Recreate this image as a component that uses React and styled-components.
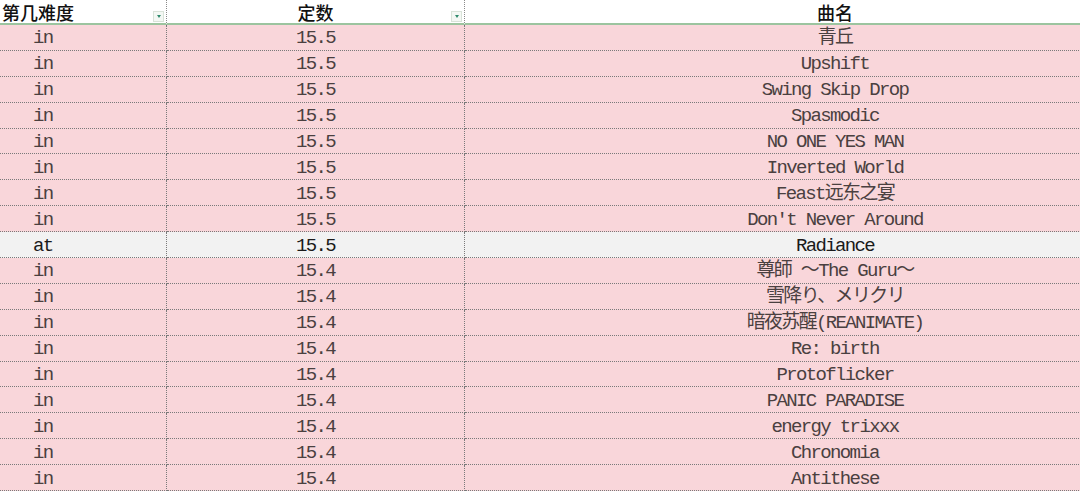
import styled, { createGlobalStyle } from "styled-components";

const GlobalStyle = createGlobalStyle`
  html, body {
    margin: 0;
    padding: 0;
    background: #ffffff;
  }
  body {
    width: 1080px;
    height: 491px;
    overflow: hidden;
  }
`;

const songs = [
  ["in", "15.5", "青丘"],
  ["in", "15.5", "Upshift"],
  ["in", "15.5", "Swing Skip Drop"],
  ["in", "15.5", "Spasmodic"],
  ["in", "15.5", "NO ONE YES MAN"],
  ["in", "15.5", "Inverted World"],
  ["in", "15.5", "Feast远东之宴"],
  ["in", "15.5", "Don't Never Around"],
  ["at", "15.5", "Radiance"],
  ["in", "15.4", "尊師 ～The Guru～"],
  ["in", "15.4", "雪降り、メリクリ"],
  ["in", "15.4", "暗夜苏醒(REANIMATE)"],
  ["in", "15.4", "Re: birth"],
  ["in", "15.4", "Protoflicker"],
  ["in", "15.4", "PANIC PARADISE"],
  ["in", "15.4", "energy trixxx"],
  ["in", "15.4", "Chronomia"],
  ["in", "15.4", "Antithese"],
];

const Sheet = styled.div`
  width: 1080px;
  height: 491px;
  overflow: hidden;
`;

const Grid = styled.div`
  display: grid;
  grid-template-columns: 167px 298px 740px;
  grid-template-rows: 25px repeat(18, 25.9px);
  width: 1205px;
`;

const HeadCell = styled.div`
  display: flex;
  align-items: center;
  justify-content: ${(p) => (p.$left ? "flex-start" : "center")};
  position: relative;
  box-sizing: border-box;
  padding-left: ${(p) => (p.$left ? "2px" : "0")};
  padding-top: 1px;
  background: #ffffff;
  border-bottom: 2px solid #9cc49f;
  border-right: ${(p) => (p.$last ? "none" : "1px dotted #8a8a8a")};
  font-family: "Noto Sans CJK SC", sans-serif;
  font-size: 18px;
  font-weight: 500;
  color: #111111;
  line-height: 22px;
`;

const FilterButton = styled.span`
  position: absolute;
  right: 2px;
  bottom: 1px;
  width: 11px;
  height: 11px;
  box-sizing: border-box;
  border: 1px solid #d9e3d9;
  background: #f4f8f4;
  display: flex;
  align-items: center;
  justify-content: center;

  &::after {
    content: "";
    width: 0;
    height: 0;
    border-left: 2.5px solid transparent;
    border-right: 2.5px solid transparent;
    border-top: 3px solid #2f8a6c;
  }
`;

const Cell = styled.div`
  display: flex;
  align-items: center;
  justify-content: ${(p) => (p.$left ? "flex-start" : "center")};
  box-sizing: border-box;
  padding-left: ${(p) => (p.$left ? "33px" : "0")};
  padding-top: 2px;
  background: ${(p) => (p.$alt ? "#f2f2f2" : "#f9d6da")};
  border-bottom: 1px dotted #7a7a7a;
  border-right: ${(p) => (p.$last ? "none" : "1px dotted #7a7a7a")};
  font-family: "Liberation Mono", "Noto Sans CJK SC", monospace;
  font-size: 19px;
  letter-spacing: -1.65px;
  color: ${(p) => (p.$alt ? "#1a1a1a" : "#4a4040")};
  white-space: pre;
  line-height: 22px;
`;

function HeaderRow() {
  return (
    <>
      <HeadCell $left>
        第几难度
        <FilterButton />
      </HeadCell>
      <HeadCell>
        定数
        <FilterButton />
      </HeadCell>
      <HeadCell $last>曲名</HeadCell>
    </>
  );
}

function SongRow({ song }) {
  const [level, constant, title] = song;
  const alt = level === "at";
  return (
    <>
      <Cell $left $alt={alt}>{level}</Cell>
      <Cell $alt={alt}>{constant}</Cell>
      <Cell $last $alt={alt}>{title}</Cell>
    </>
  );
}

export default function App() {
  return (
    <>
      <GlobalStyle />
      <Sheet>
        <Grid>
          <HeaderRow />
          {songs.map((s, i) => (
            <SongRow key={i} song={s} />
          ))}
        </Grid>
      </Sheet>
    </>
  );
}
